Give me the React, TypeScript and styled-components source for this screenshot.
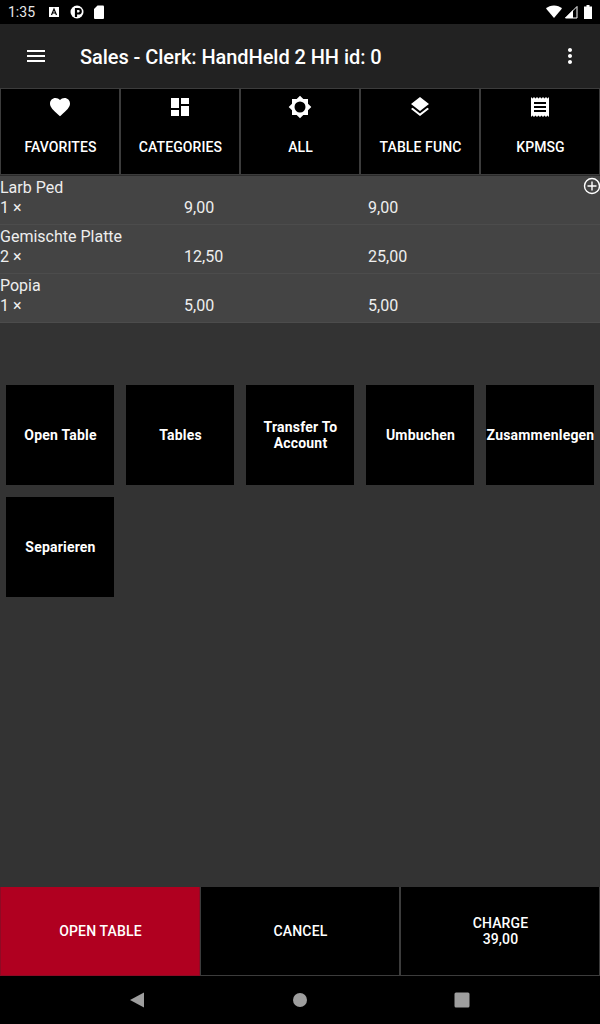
import styled, { createGlobalStyle } from "styled-components";

const GlobalStyle = createGlobalStyle`
  html, body {
    margin: 0;
    padding: 0;
    background: #333;
  }
  * {
    box-sizing: border-box;
  }
`;

const Screen = styled.div`
  width: 600px;
  height: 1024px;
  display: flex;
  flex-direction: column;
  overflow: hidden;
  background: #333;
  color: #fff;
  font-family: Roboto, "Liberation Sans", sans-serif;
`;

const StatusBar = styled.div`
  height: 24px;
  flex: none;
  display: flex;
  align-items: center;
  padding: 0 8px;
  background: #000;
`;

const Clock = styled.span`
  width: 39px;
  font-size: 14px;
  color: #e8e8e8;
`;

const StatusGroup = styled.div<{ $right?: boolean }>`
  display: flex;
  align-items: center;
  gap: ${(props) => (props.$right ? "1px" : "8px")};
  margin-left: ${(props) => (props.$right ? "auto" : "0")};
`;

const Toolbar = styled.header`
  height: 64px;
  flex: none;
  display: flex;
  align-items: center;
  padding: 0 18px 0 24px;
  background: #222;
`;

const Title = styled.h1`
  flex: 1;
  margin: 2px 0 0 32px;
  font-size: 20px;
  font-weight: 500;
  line-height: 24px;
  letter-spacing: -0.06px;
`;

const Tabs = styled.nav`
  height: 88px;
  flex: none;
  display: grid;
  grid-template-columns: repeat(5, 120px);
  border-bottom: 1px solid #2b2b2b;
`;

const Tab = styled.div`
  display: flex;
  flex-direction: column;
  align-items: center;
  padding-top: 6px;
  background: #000;
  border: 1px solid #3c3c3c;
`;

const TabLabel = styled.span`
  margin-top: 18px;
  padding-left: 1px;
  font-size: 14px;
  font-weight: 500;
  line-height: 20px;
  letter-spacing: 0.1px;
`;

const OrderList = styled.div`
  position: relative;
  flex: none;
`;

const OrderRow = styled.div`
  height: 49px;
  background: #444;
  border-bottom: 1px solid #4c4c4c;
  font-size: 16px;
  line-height: 19px;
  color: #eee;
  padding-top: 2px;
`;

const ItemName = styled.div`
  height: 20px;
`;

const Amounts = styled.div`
  display: grid;
  grid-template-columns: 184px 184px 1fr;
  height: 20px;
`;

const AddButton = styled.div`
  position: absolute;
  top: 1px;
  right: -1px;
  display: flex;
`;

const Body = styled.main`
  flex: 1;
  padding-top: 56px;
`;

const TileGrid = styled.div`
  display: grid;
  grid-template-columns: repeat(5, 108px);
  grid-auto-rows: 100px;
  gap: 12px;
  padding: 6px;
`;

const Tile = styled.div`
  display: flex;
  align-items: center;
  justify-content: center;
  padding-left: 1px;
  background: #000;
  font-size: 14px;
  font-weight: 700;
  line-height: 16px;
  letter-spacing: 0.2px;
  text-align: center;
  white-space: pre-line;
`;

const ActionBar = styled.div`
  height: 89px;
  flex: none;
  display: grid;
  grid-template-columns: repeat(3, 200px);
`;

const ActionButton = styled.div<{ $primary?: boolean }>`
  display: flex;
  align-items: center;
  justify-content: center;
  padding-left: 1px;
  background: ${(props) => (props.$primary ? "#b00020" : "#000")};
  border: 1px solid ${(props) => (props.$primary ? "#8f0a24" : "#3c3c3c")};
  border-width: 0 1px 1px 1px;
  font-size: 14px;
  font-weight: 500;
  line-height: 16px;
  letter-spacing: 0.15px;
  text-align: center;
  white-space: pre-line;
`;

const NavBar = styled.footer`
  height: 48px;
  flex: none;
  display: flex;
  align-items: center;
  background: #000;
  padding-left: 129px;
  gap: 146.5px;
`;

const items = [
  { name: "Larb Ped", qty: 1, price: "9,00", total: "9,00" },
  { name: "Gemischte Platte", qty: 2, price: "12,50", total: "25,00" },
  { name: "Popia", qty: 1, price: "5,00", total: "5,00" },
];

const tiles = [
  "Open Table",
  "Tables",
  "Transfer To\nAccount",
  "Umbuchen",
  "Zusammenlegen",
  "Separieren",
];

const tabIcons: Record<string, string> = {
  FAVORITES:
    "M12 21.35l-1.45-1.32C5.4 15.36 2 12.28 2 8.5 2 5.42 4.42 3 7.5 3c1.74 0 3.41.81 4.5 2.09C13.09 3.81 14.76 3 16.5 3 19.58 3 22 5.42 22 8.5c0 3.78-3.4 6.86-8.55 11.54L12 21.35z",
  CATEGORIES: "M3 13h8V3H3v10zm0 8h8v-6H3v6zm10 0h8V11h-8v10zm0-18v6h8V3h-8z",
  ALL: "M20 8.69V4h-4.69L12 .69 8.69 4H4v4.69L.69 12 4 15.31V20h4.69L12 23.31 15.31 20H20v-4.69L23.31 12 20 8.69zM12 17.5a5.5 5.5 0 110-11 5.5 5.5 0 010 11z",
  "TABLE FUNC":
    "M11.99 18.54l-7.37-5.73L3 14.07l9 7 9-7-1.63-1.27-7.38 5.74zM12 16l7.36-5.73L21 9l-9-7-9 7 1.63 1.27L12 16z",
  KPMSG:
    "M18 17H6v-2h12v2zm0-4H6v-2h12v2zm0-4H6V7h12v2zM3 22l1.5-1.5L6 22l1.5-1.5L9 22l1.5-1.5L12 22l1.5-1.5L15 22l1.5-1.5L18 22l1.5-1.5L21 22V2l-1.5 1.5L18 2l-1.5 1.5L15 2l-1.5 1.5L12 2l-1.5 1.5L9 2 7.5 3.5 6 2 4.5 3.5 3 2v20z",
};

function MaterialIcon({ d, size = 24, fill = "#fff" }: { d: string; size?: number; fill?: string }) {
  return (
    <svg width={size} height={size} viewBox="0 0 24 24" fill={fill}>
      <path d={d} />
    </svg>
  );
}

function App() {
  return (
    <Screen>
      <GlobalStyle />
      <StatusBar>
        <Clock>1:35</Clock>
        <StatusGroup>
          <svg width="14" height="14" viewBox="0 0 14 14">
            <rect x="2" y="2" width="10" height="10" fill="#fff" />
            <path d="M4.5 10L7 4l2.5 6M5.5 8h3" stroke="#000" strokeWidth="1.2" fill="none" />
          </svg>
          <svg width="16" height="16" viewBox="0 0 16 16">
            <circle cx="8" cy="8" r="6.5" fill="#fff" />
            <path d="M7 13V5h2.5a2 2 0 010 4.500H7" stroke="#000" strokeWidth="2.2" fill="none" />
          </svg>
          <svg width="12" height="16" viewBox="0 0 12 16">
            <path d="M4.500 1.500H10a1 1 0 011 1V14a1 1 0 01-1 1H2a1 1 0 01-1-1V5z" fill="#fff" />
          </svg>
        </StatusGroup>
        <StatusGroup $right>
          <svg width="16" height="14" viewBox="0 0 16 14">
            <path d="M8 13L0 3.500C2 1.700 4.800.5 8 .5s6 1.200 8 3z" fill="#fff" />
          </svg>
          <svg width="20" height="14" viewBox="0 0 20 14">
            <path d="M14 1.500V13H2.500z" fill="none" stroke="#fff" strokeWidth="1" />
            <path d="M10 5v8H2z" fill="#fff" />
          </svg>
          <svg width="8" height="14" viewBox="0 0 8 14">
            <path d="M2.500 0h3v1.500H8V14H0V1.500h2.500z" fill="#fff" />
          </svg>
        </StatusGroup>
      </StatusBar>

      <Toolbar>
        <MaterialIcon d="M3 18h18v-2H3v2zm0-5h18v-2H3v2zm0-7v2h18V6H3z" />
        <Title>Sales - Clerk: HandHeld 2 HH id: 0</Title>
        <MaterialIcon d="M12 8c1.100 0 2-.9 2-2s-.9-2-2-2-2 .9-2 2 .9 2 2 2zm0 2c-1.100 0-2 .9-2 2s.9 2 2 2 2-.9 2-2-.9-2-2-2zm0 6c-1.100 0-2 .9-2 2s.9 2 2 2 2-.9 2-2-.9-2-2-2z" />
      </Toolbar>

      <Tabs>
        {Object.keys(tabIcons).map((label) => (
          <Tab key={label}>
            <MaterialIcon d={tabIcons[label]} />
            <TabLabel>{label}</TabLabel>
          </Tab>
        ))}
      </Tabs>

      <OrderList>
        {items.map((item) => (
          <OrderRow key={item.name}>
            <ItemName>{item.name}</ItemName>
            <Amounts>
              <span>{item.qty} ×</span>
              <span>{item.price}</span>
              <span>{item.total}</span>
            </Amounts>
          </OrderRow>
        ))}
        <AddButton>
          <svg width="18" height="18" viewBox="0 0 18 18" fill="none" stroke="#fff" strokeWidth="1.4">
            <circle cx="9" cy="9" r="7.5" />
            <path d="M9 4.500v9M4.500 9h9" />
          </svg>
        </AddButton>
      </OrderList>

      <Body>
        <TileGrid>
          {tiles.map((tile) => (
            <Tile key={tile}>{tile}</Tile>
          ))}
        </TileGrid>
      </Body>

      <ActionBar>
        <ActionButton $primary>OPEN TABLE</ActionButton>
        <ActionButton>CANCEL</ActionButton>
        <ActionButton>{"CHARGE\n39,00"}</ActionButton>
      </ActionBar>

      <NavBar>
        <svg width="16" height="18" viewBox="0 0 16 18">
          <path d="M15 1.500v15L1 9z" fill="#9e9e9e" />
        </svg>
        <svg width="16" height="18" viewBox="0 0 16 18">
          <circle cx="8" cy="9" r="7" fill="#9e9e9e" />
        </svg>
        <svg width="16" height="16" viewBox="0 0 16 16">
          <rect x="0.500" y="0.500" width="15" height="15" rx="1.500" fill="#9e9e9e" />
        </svg>
      </NavBar>
    </Screen>
  );
}

export default App;
